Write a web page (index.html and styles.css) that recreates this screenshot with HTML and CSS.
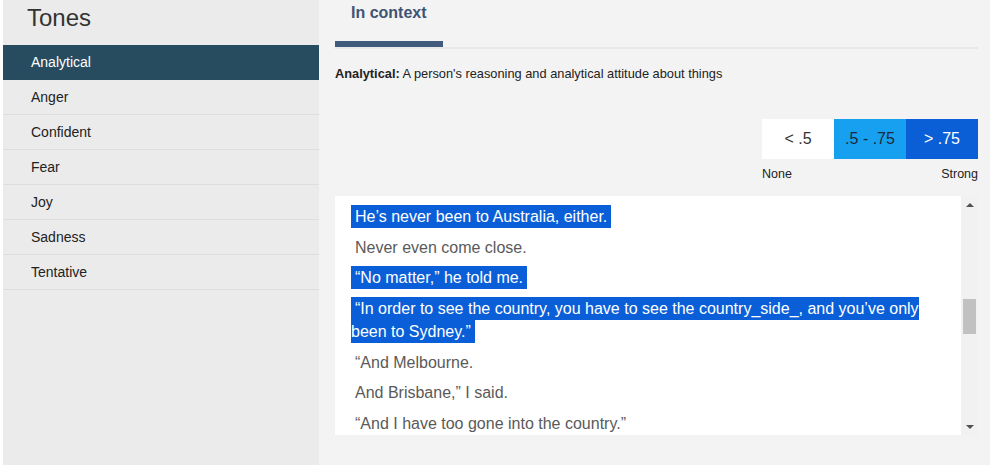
FILE: index.html
```html
<!DOCTYPE html>
<html lang="en">
<head>
<meta charset="utf-8">
<title>Tones</title>
<link rel="stylesheet" href="styles.css">
</head>
<body>
<div class="app">
  <aside class="sidebar">
    <h1 class="sidebar-title">Tones</h1>
    <ul class="tone-list">
      <li class="tone-item is-active">Analytical</li>
      <li class="tone-item">Anger</li>
      <li class="tone-item">Confident</li>
      <li class="tone-item">Fear</li>
      <li class="tone-item">Joy</li>
      <li class="tone-item">Sadness</li>
      <li class="tone-item">Tentative</li>
    </ul>
  </aside>
  <main class="main">
    <div class="tabs">
      <div class="tab is-active">In context</div>
    </div>
    <p class="desc"><b>Analytical:</b> A person's reasoning and analytical attitude about things</p>
    <div class="legend">
      <div class="legend-scale">
        <div class="legend-box lvl-low">&lt; .5</div>
        <div class="legend-box lvl-mid">.5 - .75</div>
        <div class="legend-box lvl-high">&gt; .75</div>
      </div>
      <div class="legend-labels">
        <span>None</span>
        <span>Strong</span>
      </div>
    </div>
    <div class="textbox">
      <div class="textbox-content">
        <div class="sentence"><span class="s hl">He’s never been to Australia, either.</span></div>
        <div class="sentence"><span class="s">Never even come close.</span></div>
        <div class="sentence"><span class="s hl">“No matter,” he told me.</span></div>
        <div class="sentence"><span class="s hl">“In order to see the country, you have to see the country_side_, and you’ve only been to Sydney.”</span></div>
        <div class="sentence"><span class="s">“And Melbourne.</span></div>
        <div class="sentence"><span class="s">And Brisbane,” I said.</span></div>
        <div class="sentence"><span class="s">“And I have too gone into the country.”</span></div>
      </div>
      <div class="scrollbar">
        <div class="arrow arrow-up"></div>
        <div class="track"><div class="thumb"></div></div>
        <div class="arrow arrow-down"></div>
      </div>
    </div>
  </main>
</div>
</body>
</html>
```
FILE: styles.css
```css
* { box-sizing: border-box; }
html, body { margin: 0; padding: 0; background: #ffffff; }
body { font-family: "Liberation Sans", Arial, sans-serif; color: #222; }

.app {
  display: flex;
  height: 465px;
  margin-left: 3px;
}

.sidebar {
  width: 316px;
  flex: none;
  background: #ebebeb;
}
.sidebar-title {
  margin: 0;
  height: 45px;
  padding: 4px 0 0 24px;
  font-size: 24px;
  line-height: 28px;
  font-weight: normal;
  color: #333;
}
.tone-list { list-style: none; margin: 0; padding: 0; }
.tone-item {
  height: 35px;
  padding-left: 28px;
  font-size: 14px;
  line-height: 35px;
  color: #222;
  border-bottom: 1px solid #dedede;
}
.tone-item.is-active {
  background: #274c5f;
  color: #fff;
  border-bottom-color: #274c5f;
}

.main {
  flex: 1;
  display: flex;
  flex-direction: column;
  background: #f3f3f3;
  padding: 0 12px 0 16px;
}

.tabs {
  display: flex;
  border-bottom: 2px solid #e8e8e8;
}
.tab {
  width: 108px;
  height: 47px;
  padding: 3px 0 0 16px;
  font-weight: bold;
  font-size: 16px;
  line-height: 20px;
  color: #3f5474;
  border-bottom: 6px solid #405b7c;
}

.desc {
  margin: 18px 0 0;
  font-size: 12.8px;
  line-height: 14px;
  color: #222;
}

.legend {
  align-self: flex-end;
  width: 216px;
  margin-top: 38px;
}
.legend-scale { display: flex; }
.legend-box {
  flex: 1;
  height: 40px;
  text-align: center;
  font-size: 16px;
  line-height: 40px;
}
.lvl-low { background: #ffffff; color: #333; }
.lvl-mid { background: #17a0ef; color: #1b2a3a; }
.lvl-high { background: #0a5fd6; color: #ffffff; }
.legend-labels {
  display: flex;
  justify-content: space-between;
  margin-top: 8px;
  font-size: 12.5px;
  line-height: 14px;
  color: #222;
}

.textbox {
  margin-top: 15px;
  height: 239px;
  display: flex;
  background: #ffffff;
  overflow: hidden;
}
.textbox-content {
  flex: 1;
  padding: 9px 16px 0 16px;
  font-size: 16px;
  line-height: 23.5px;
  color: #5a5a5a;
  overflow: hidden;
}
.sentence { margin-bottom: 7px; }
.s { padding: 3px 4px; }
.s.hl {
  background: #0a5fd8;
  color: #ffffff;
}

.scrollbar {
  width: 17px;
  flex: none;
  display: flex;
  flex-direction: column;
  background: #f1f1f1;
}
.arrow {
  height: 17px;
  flex: none;
  display: flex;
  align-items: center;
  justify-content: center;
}
.arrow::before {
  content: "";
  width: 0;
  height: 0;
  border-left: 4px solid transparent;
  border-right: 4px solid transparent;
}
.arrow-up::before { border-bottom: 4px solid #505050; }
.arrow-down::before { border-top: 4px solid #505050; }
.track { flex: 1; padding: 0 2px; }
.thumb {
  margin-top: 86px;
  height: 35px;
  background: #c1c1c1;
}
```
